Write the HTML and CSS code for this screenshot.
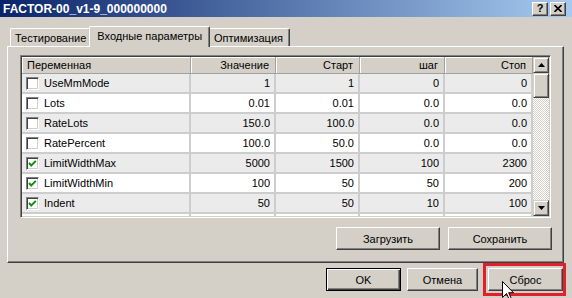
FILE: index.html
```html
<!DOCTYPE html>
<html>
<head>
<meta charset="utf-8">
<link rel="stylesheet" href="styles.css">
</head>
<body>
<div class="window">
  <div class="titlebar">
    <span class="title">FACTOR-00_v1-9_000000000</span>
    <div class="tb-buttons">
      <span class="tb-btn">?</span>
      <span class="tb-btn"><svg width="8" height="7" viewBox="0 0 8 7"><path d="M0.5 0 L7.5 7 M7.5 0 L0.5 7" stroke="#000" stroke-width="1.6"/></svg></span>
    </div>
  </div>
  <div class="tabs">
    <div class="tab t1">Тестирование</div>
    <div class="tab active">Входные параметры</div>
    <div class="tab t3">Оптимизация</div>
  </div>
  <div class="panel">
    <div class="grid-box">
      <div class="cols">
        <div class="hdr">
          <div class="hc w1 left">Переменная</div>
          <div class="hc w2">Значение</div>
          <div class="hc w3">Старт</div>
          <div class="hc w4">шаг</div>
          <div class="hc w5">Стоп</div>
        </div>
        <div class="row gray">
          <div class="c w1 name"><span class="cb"></span>UseMmMode</div>
          <div class="c w2">1</div><div class="c w3">1</div><div class="c w4">0</div><div class="c w5">0</div>
        </div>
        <div class="row">
          <div class="c w1 name"><span class="cb"></span>Lots</div>
          <div class="c w2">0.01</div><div class="c w3">0.01</div><div class="c w4">0.0</div><div class="c w5">0.0</div>
        </div>
        <div class="row gray">
          <div class="c w1 name"><span class="cb"></span>RateLots</div>
          <div class="c w2">150.0</div><div class="c w3">100.0</div><div class="c w4">0.0</div><div class="c w5">0.0</div>
        </div>
        <div class="row">
          <div class="c w1 name"><span class="cb"></span>RatePercent</div>
          <div class="c w2">100.0</div><div class="c w3">50.0</div><div class="c w4">0.0</div><div class="c w5">0.0</div>
        </div>
        <div class="row gray">
          <div class="c w1 name"><span class="cb"><svg width="11" height="11" viewBox="0 0 11 11"><polyline points="2,5 4.2,7.5 8.8,2.8" fill="none" stroke="#109010" stroke-width="1.9"/></svg></span>LimitWidthMax</div>
          <div class="c w2">5000</div><div class="c w3">1500</div><div class="c w4">100</div><div class="c w5">2300</div>
        </div>
        <div class="row">
          <div class="c w1 name"><span class="cb"><svg width="11" height="11" viewBox="0 0 11 11"><polyline points="2,5 4.2,7.5 8.8,2.8" fill="none" stroke="#109010" stroke-width="1.9"/></svg></span>LimitWidthMin</div>
          <div class="c w2">100</div><div class="c w3">50</div><div class="c w4">50</div><div class="c w5">200</div>
        </div>
        <div class="row gray">
          <div class="c w1 name"><span class="cb"><svg width="11" height="11" viewBox="0 0 11 11"><polyline points="2,5 4.2,7.5 8.8,2.8" fill="none" stroke="#109010" stroke-width="1.9"/></svg></span>Indent</div>
          <div class="c w2">50</div><div class="c w3">50</div><div class="c w4">10</div><div class="c w5">100</div>
        </div>
        <div class="row">
          <div class="c w1 name"></div>
          <div class="c w2"></div><div class="c w3"></div><div class="c w4"></div><div class="c w5"></div>
        </div>
      </div>
      <div class="vscroll">
        <div class="sb-btn"><svg width="7" height="4" viewBox="0 0 7 4"><polygon points="0,4 7,4 3.5,0" fill="#000"/></svg></div>
        <div class="sb-btn thumb"></div>
        <div class="track"></div>
        <div class="sb-btn"><svg width="7" height="4" viewBox="0 0 7 4"><polygon points="0,0 7,0 3.5,4" fill="#000"/></svg></div>
      </div>
    </div>
    <div class="panel-buttons">
      <button class="btn wide">Загрузить</button>
      <button class="btn wide">Сохранить</button>
    </div>
  </div>
  <div class="dialog-buttons">
    <button class="btn default">OK</button>
    <button class="btn cancel">Отмена</button>
    <button class="btn reset">Сброс</button>
  </div>
  <div class="highlight"></div>
  <svg class="cursor" width="13" height="20" viewBox="0 0 13 20"><polygon points="0.5,0.5 0.5,16.5 4.5,12.5 7.5,19 9.5,18 6.7,11.7 11.5,11.7" fill="#fff" stroke="#000" stroke-width="1"/></svg>
</div>
</body>
</html>
```

FILE: styles.css
```css
* { box-sizing: border-box; }
html, body { margin: 0; padding: 0; }
body {
  width: 572px;
  height: 298px;
  overflow: hidden;
  background: #d4d0c8;
  font-family: "Liberation Sans", Arial, sans-serif;
  font-size: 11px;
  color: #000;
}
.window {
  position: relative;
  width: 572px;
  height: 298px;
  background: #d4d0c8;
  overflow: hidden;
}
.titlebar {
  height: 17px;
  display: flex;
  align-items: center;
  justify-content: space-between;
  padding: 0 6px 0 3px;
  background: linear-gradient(to right, #0a246a, #a6caf0);
}
.title {
  color: #fff;
  font-weight: bold;
  font-size: 12px;
}
.tb-buttons { display: flex; gap: 2px; }
.tb-btn {
  width: 16px;
  height: 14px;
  display: flex;
  align-items: center;
  justify-content: center;
  background: #d4d0c8;
  border-top: 1px solid #fff;
  border-left: 1px solid #fff;
  border-right: 1px solid #404040;
  border-bottom: 1px solid #404040;
  box-shadow: inset -1px -1px #808080;
  font-weight: bold;
  font-size: 11px;
  line-height: 1;
}
.tabs {
  height: 29px;
  display: flex;
  align-items: flex-end;
  padding-left: 10px;
}
.tab {
  height: 18px;
  padding: 1px 4px 0 4px;
  line-height: 16px;
  border-top: 1px solid #fff;
  border-left: 1px solid #fff;
  border-right: 1px solid #404040;
  box-shadow: inset -1px 0 #808080;
  border-radius: 2px 2px 0 0;
  background: #d4d0c8;
  white-space: nowrap;
}
.tab.active {
  height: 21px;
  margin: 0 -2px -1px -2px;
  padding: 1px 7px 0 7px;
  position: relative;
  z-index: 1;
}
.tab.t3 { padding: 1px 6px 0 5px; }
.panel {
  width: 557px;
  height: 217px;
  margin-left: 7px;
  border-top: 1px solid #fff;
  border-left: 1px solid #fff;
  border-right: 1px solid #404040;
  border-bottom: 1px solid #404040;
  box-shadow: inset -1px -1px #808080;
  padding: 8px 11px 0 12px;
  display: flex;
  flex-direction: column;
}
.grid-box {
  width: 531px;
  height: 163px;
  flex: none;
  border-top: 1px solid #808080;
  border-left: 1px solid #808080;
  border-right: 1px solid #fff;
  border-bottom: 1px solid #fff;
  box-shadow: inset 1px 1px #404040, inset -1px -1px #d4d0c8;
  padding: 1px;
  display: flex;
  overflow: hidden;
  background: #fff;
}
.cols {
  width: 511px;
  height: 159px;
  overflow: hidden;
  display: flex;
  flex-direction: column;
}
.hdr {
  display: flex;
  height: 17px;
  flex: none;
  background: #d4d0c8;
}
.hc {
  height: 17px;
  line-height: 15px;
  padding: 1px 6px 0 4px;
  text-align: right;
  border-right: 1px solid #a0a0a0;
  border-bottom: 1px solid #a0a0a0;
  box-shadow: inset 1px 1px #fff;
  white-space: nowrap;
}
.hc.left { text-align: left; padding-left: 5px; }
.w1 { width: 169px; }
.w2 { width: 85px; }
.w3 { width: 84px; }
.w4 { width: 85px; }
.w5 { width: 88px; }
.row {
  display: flex;
  height: 20px;
  flex: none;
  background: #fff;
  border-bottom: 2px solid #cdcdcd;
}
.row.gray { background: #ebebeb; }
.c {
  height: 18px;
  line-height: 19px;
  padding-right: 4px;
  text-align: right;
  border-right: 2px solid #cdcdcd;
  white-space: nowrap;
}
.c.name {
  display: flex;
  align-items: center;
  gap: 5px;
  padding-left: 4px;
  text-align: left;
  line-height: 18px;
}
.cb {
  width: 13px;
  height: 13px;
  flex: none;
  background: #fff;
  border-top: 1px solid #808080;
  border-left: 1px solid #808080;
  border-right: 1px solid #fff;
  border-bottom: 1px solid #fff;
  box-shadow: inset 1px 1px #404040, inset -1px -1px #d4d0c8;
  display: flex;
}
.vscroll {
  width: 16px;
  height: 159px;
  display: flex;
  flex-direction: column;
  background: repeating-conic-gradient(#fff 0 25%, #d4d0c8 0 50%) 0 0 / 2px 2px;
}
.sb-btn {
  height: 16px;
  flex: none;
  background: #d4d0c8;
  border-top: 1px solid #d4d0c8;
  border-left: 1px solid #d4d0c8;
  border-right: 1px solid #404040;
  border-bottom: 1px solid #404040;
  box-shadow: inset 1px 1px #fff, inset -1px -1px #808080;
  display: flex;
  align-items: center;
  justify-content: center;
}
.thumb { height: 25px; }
.track { flex: 1; }
.btn {
  font-family: "Liberation Sans", Arial, sans-serif;
  font-size: 11px;
  height: 23px;
  padding: 0;
  margin: 0;
  background: #d4d0c8;
  color: #000;
  border-top: 1px solid #fff;
  border-left: 1px solid #fff;
  border-right: 1px solid #404040;
  border-bottom: 1px solid #404040;
  box-shadow: inset -1px -1px #808080;
  border-radius: 0;
}
.panel-buttons {
  margin-top: 9px;
  display: flex;
  justify-content: flex-end;
  gap: 8px;
}
.btn.wide { width: 104px; }
.dialog-buttons {
  margin-top: 5px;
  display: flex;
  justify-content: flex-end;
  padding-right: 9px;
}
.btn.default {
  width: 75px;
  border: 1px solid #000;
  box-shadow: inset 1px 1px #fff, inset -1px -1px #404040, inset -2px -2px #808080;
}
.btn.cancel { width: 71px; margin-left: 6px; }
.btn.reset { width: 75px; margin-left: 10px; }
.highlight {
  position: absolute;
  left: 483px;
  top: 263px;
  width: 83px;
  height: 33px;
  border: 3px solid #e2202a;
}
.cursor {
  position: absolute;
  left: 502px;
  top: 281px;
}
```
